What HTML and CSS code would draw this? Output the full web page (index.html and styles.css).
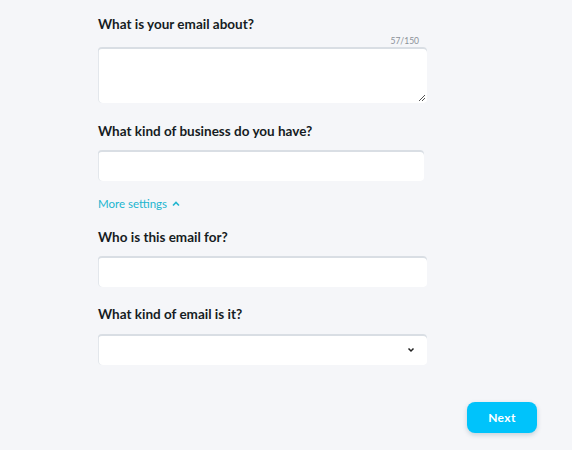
FILE: index.html
```html
<!DOCTYPE html>
<html>
<head>
<meta charset="utf-8">
<link rel="stylesheet" href="styles.css">
</head>
<body>
<div class="page">
  <form class="form">
    <div class="field">
      <label class="label">What is your email about?</label>
      <div class="counter">57/150</div>
      <div class="textarea"><span class="grip"></span></div>
    </div>
    <div class="field gap-19">
      <label class="label">What kind of business do you have?</label>
      <div class="input narrow"></div>
    </div>
    <div class="more">More settings
      <svg width="8" height="6" viewBox="0 0 8 6"><path d="M1 4.5 L4 1.5 L7 4.5" fill="none" stroke="#22b5cf" stroke-width="1.6"/></svg>
    </div>
    <div class="field gap-17">
      <label class="label">Who is this email for?</label>
      <div class="input"></div>
    </div>
    <div class="field gap-18">
      <label class="label">What kind of email is it?</label>
      <div class="input select">
        <svg width="8" height="6" viewBox="0 0 8 6"><path d="M1.5 1.5 L4 4 L6.5 1.5" fill="none" stroke="#222" stroke-width="1.5"/></svg>
      </div>
    </div>
  </form>
  <div class="actions">
    <button class="next" type="button">Next</button>
  </div>
</div>
</body>
</html>
```
FILE: styles.css
```css
html, body {
  margin: 0;
  padding: 0;
  background: #f5f6f9;
  font-family: "Lato", "Noto Sans", sans-serif;
}
.page {
  width: 572px;
  height: 450px;
  position: relative;
  overflow: hidden;
}
.form {
  margin-left: 98px;
  width: 329px;
  padding-top: 15px;
  display: flex;
  flex-direction: column;
}
.field {
  display: flex;
  flex-direction: column;
}
.gap-19 { margin-top: 19px; }
.gap-17 { margin-top: 17px; }
.gap-18 { margin-top: 18px; }
.label {
  font-weight: 700;
  font-size: 13.5px;
  letter-spacing: 0;
  color: #161c23;
  line-height: 18px;
}
.counter {
  align-self: flex-end;
  margin-right: 8px;
  margin-top: 3px;
  font-size: 8.5px;
  color: #8a9098;
  letter-spacing: 0;
  line-height: 11px;
}
.textarea, .input {
  background: #fff;
  border-radius: 4px;
  box-shadow: inset 0 2px 0 #d9dee4, inset 1px 0 0 #e3e7ec;
  box-sizing: border-box;
  position: relative;
}
.textarea {
  margin-top: 0;
  height: 56px;
}
.grip {
  position: absolute;
  right: 2px;
  bottom: 2px;
  width: 6px;
  height: 6px;
  background: linear-gradient(135deg, transparent 45%, #555 45%, #555 55%, transparent 55%, transparent 70%, #555 70%, #555 80%, transparent 80%);
}
.input {
  margin-top: 10px;
  height: 31px;
}
.gap-18 .input {
  margin-top: 11px;
}
.input.narrow {
  width: 326px;
}
.more {
  margin-top: 16px;
  font-size: 11.5px;
  color: #22b5cf;
  line-height: 14px;
  display: flex;
  align-items: center;
  gap: 5px;
}
.select {
  display: flex;
  align-items: center;
  justify-content: flex-end;
  padding-right: 12px;
}
.actions {
  position: absolute;
  left: 467px;
  top: 402px;
}
.next {
  width: 70px;
  height: 31px;
  border: none;
  border-radius: 8px;
  background: #00c3fb;
  color: #fff;
  font-family: "Lato", "Noto Sans", sans-serif;
  font-weight: 700;
  font-size: 12px;
  letter-spacing: 0.4px;
  box-shadow: 0 2px 5px rgba(0, 60, 90, 0.2);
}
```
